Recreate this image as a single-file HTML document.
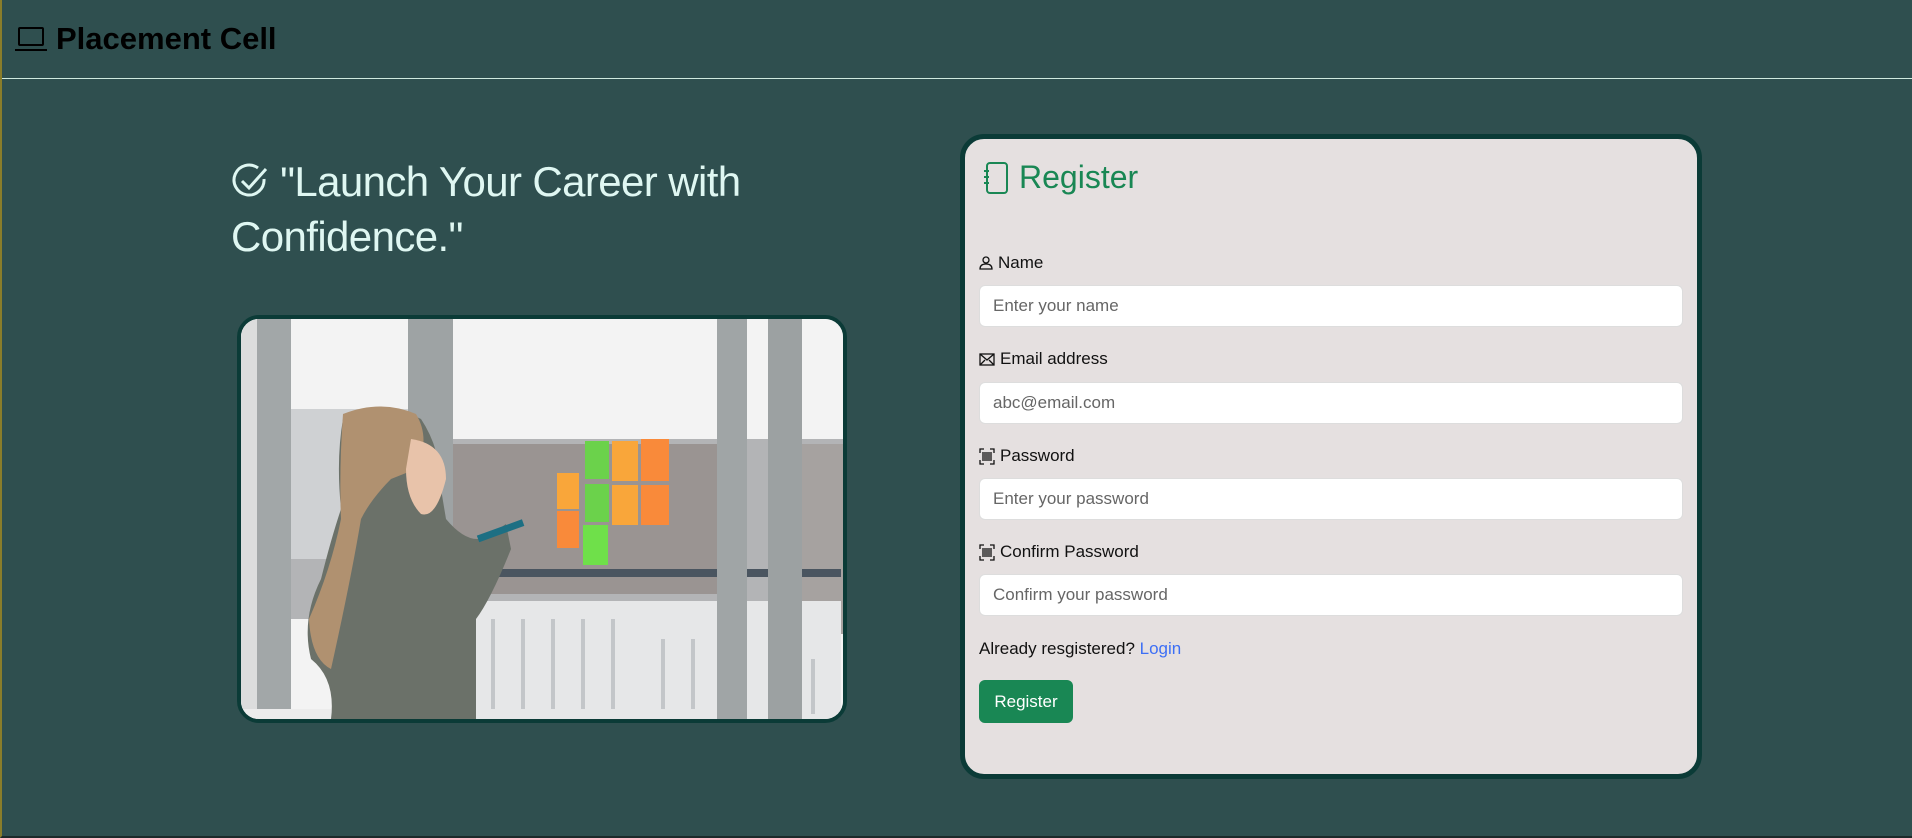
<!DOCTYPE html>
<html><head><meta charset="utf-8">
<style>
*{box-sizing:border-box;margin:0;padding:0}
html,body{width:1912px;height:838px;overflow:hidden}
body{background:#2f4f4f;font-family:"Liberation Sans",sans-serif;position:relative;border-left:2px solid #8a7d2a;border-bottom:2px solid #1c2a2a}
.hdr{position:absolute;left:0;top:0;width:1912px;height:79px;border-bottom:1px solid #cfe9df}
.brand{position:absolute;left:12px;top:21px;font-size:31px;font-weight:bold;color:#000;display:flex;align-items:center;gap:8px}
.quote{position:absolute;left:229px;top:154px;width:560px;font-size:42px;font-weight:300;color:#dff7f2;line-height:55px;letter-spacing:-0.6px}
.photo{position:absolute;left:235px;top:315px;width:610px;height:408px;border:4px solid #0b3b37;border-radius:22px;overflow:hidden;background:#eee}
.card{position:absolute;left:958px;top:134px;width:742px;height:645px;background:#e5e0e0;border:5px solid #0b3b37;border-radius:24px}
.title{position:absolute;left:18px;top:20px;font-size:32px;color:#198754;display:flex;align-items:center;gap:10px}
.lbl{position:absolute;left:14px;font-size:17px;color:#111;display:flex;align-items:center;gap:5px}
.inp{position:absolute;left:14px;width:704px;height:42px;background:#fff;border:1px solid #ddd;border-radius:6px;font-size:17px;color:#666;padding:10px 13px;line-height:20px}
.al{position:absolute;left:14px;top:500px;font-size:17px;color:#111}
.al span{color:#3d6ff5}
.btn{position:absolute;left:14px;top:541px;width:94px;height:43px;background:#198754;border-radius:6px;color:#fff;font-size:17px;text-align:center;line-height:43px}
</style></head><body>
<div class="hdr"><div class="brand">
<svg width="34" height="28" viewBox="0 0 34 28" fill="none" stroke="#000" stroke-width="2"><rect x="5" y="3" width="24" height="17" rx="1"/><path d="M1 25h32"/></svg>Placement Cell</div></div>

<div class="quote"><svg width="38" height="38" viewBox="0 0 38 38" fill="none" stroke="#dff7f2" stroke-width="3" style="vertical-align:-4px"><path d="M33 17a15 15 0 1 1-6-11"/><path d="M11 19l7 7 17-19"/></svg> "Launch Your Career with Confidence."</div>

<div class="photo">
<svg width="602" height="400" viewBox="0 0 602 400" preserveAspectRatio="none">
<rect width="602" height="400" fill="#f3f3f3"/>
<rect x="0" y="120" width="602" height="180" fill="#b3b4b6"/>
<rect x="210" y="125" width="270" height="150" fill="#9a9492"/>
<rect x="560" y="125" width="42" height="190" fill="#a6a2a0"/>
<rect x="0" y="90" width="170" height="150" fill="#cfd1d3"/>
<rect x="210" y="250" width="390" height="8" fill="#4a5560"/>
<rect x="230" y="282" width="370" height="118" fill="#e6e7e8"/>
<g fill="#c3c6c9"><rect x="250" y="300" width="4" height="90"/><rect x="280" y="300" width="4" height="90"/><rect x="310" y="300" width="4" height="90"/><rect x="340" y="300" width="4" height="90"/><rect x="370" y="300" width="4" height="90"/><rect x="420" y="320" width="4" height="70"/><rect x="450" y="320" width="4" height="70"/><rect x="570" y="340" width="4" height="55"/></g>
<rect x="0" y="0" width="16" height="400" fill="#dcdddd"/>
<rect x="16" y="0" width="34" height="400" fill="#a2a7a8"/>
<rect x="0" y="390" width="90" height="10" fill="#ececec"/>
<rect x="167" y="0" width="45" height="290" fill="#9ea3a4"/>
<rect x="476" y="0" width="30" height="400" fill="#a0a5a6"/>
<rect x="527" y="0" width="34" height="400" fill="#9ca1a2"/>
<g>
<rect x="316" y="154" width="22" height="36" fill="#f9a63a"/><rect x="316" y="192" width="22" height="37" fill="#f98a3a"/>
<rect x="344" y="122" width="24" height="38" fill="#6bd24b"/><rect x="344" y="165" width="24" height="38" fill="#6bd24b"/><rect x="342" y="206" width="25" height="40" fill="#6fe04a"/>
<rect x="371" y="122" width="26" height="40" fill="#f9a63a"/><rect x="371" y="166" width="26" height="40" fill="#f9a63a"/>
<rect x="400" y="120" width="28" height="42" fill="#f98a3a"/><rect x="400" y="166" width="28" height="40" fill="#f98a3a"/>
</g>
<path d="M102 100 Q140 80 180 100 Q200 130 200 170 L205 200 Q230 230 250 215 L265 205 L270 230 Q250 280 235 300 L235 400 L90 400 Q95 360 70 340 Q60 300 80 260 Q90 220 100 190 Q95 140 102 100Z" fill="#6b7169"/>
<path d="M102 95 Q140 80 175 95 Q190 120 175 150 L150 160 Q130 180 120 200 Q110 260 90 350 Q70 340 68 300 Q90 250 100 200 Q98 150 102 95Z" fill="#b09170"/>
<path d="M170 120 Q205 125 205 160 Q195 200 180 195 Q165 180 165 150Z" fill="#e8c3aa"/>
<rect x="235" y="208" width="48" height="7" fill="#1d6f83" transform="rotate(-20 260 210)"/>
</svg>
</div>

<div class="card">
<div class="title"><svg width="26" height="34" viewBox="0 0 26 34" fill="none" stroke="#198754" stroke-width="2"><rect x="4" y="2" width="20" height="30" rx="3"/><path d="M1 10h5M1 16h5M1 22h5"/></svg>Register</div>

<div class="lbl" style="top:114px"><svg width="14" height="14" viewBox="0 0 14 14" fill="none" stroke="#111" stroke-width="1.3"><circle cx="7" cy="4" r="3"/><path d="M1 13q0-5 6-5t6 5z"/></svg>Name</div>
<div class="inp" style="top:146px">Enter your name</div>

<div class="lbl" style="top:210px"><svg width="16" height="13" viewBox="0 0 16 13" fill="none" stroke="#111" stroke-width="1.3"><rect x="1" y="1" width="14" height="11"/><path d="M1 1l7 6 7-6M1 12l5-5M15 12l-5-5"/></svg>Email address</div>
<div class="inp" style="top:243px">abc@email.com</div>

<div class="lbl" style="top:307px"><svg width="16" height="17" viewBox="0 0 16 17" fill="none" stroke="#111" stroke-width="1.3"><path d="M1 5V1h4M11 1h4v4M15 12v4h-4M5 16H1v-4M4 4v9M6 4v9M8 4v9M10 4v9M12 4v9"/></svg>Password</div>
<div class="inp" style="top:339px">Enter your password</div>

<div class="lbl" style="top:403px"><svg width="16" height="17" viewBox="0 0 16 17" fill="none" stroke="#111" stroke-width="1.3"><path d="M1 5V1h4M11 1h4v4M15 12v4h-4M5 16H1v-4M4 4v9M6 4v9M8 4v9M10 4v9M12 4v9"/></svg>Confirm Password</div>
<div class="inp" style="top:435px">Confirm your password</div>

<div class="al">Already resgistered? <span>Login</span></div>
<div class="btn">Register</div>
</div>
</body></html>
